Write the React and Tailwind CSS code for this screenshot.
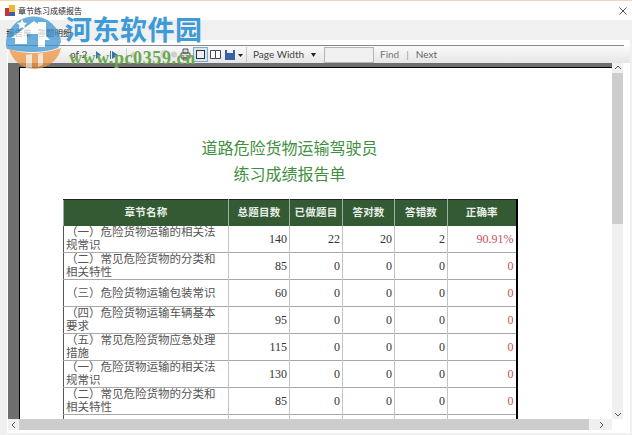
import React from "react";

const rows = [
  ["（一）危险货物运输的相关法规常识", 140, 22, 20, 2, "90.91%"],
  ["（二）常见危险货物的分类和相关特性", 85, 0, 0, 0, "0"],
  ["（三）危险货物运输包装常识", 60, 0, 0, 0, "0"],
  ["（四）危险货物运输车辆基本要求", 95, 0, 0, 0, "0"],
  ["（五）常见危险货物应急处理措施", 115, 0, 0, 0, "0"],
  ["（一）危险货物运输的相关法规常识", 130, 0, 0, 0, "0"],
  ["（二）常见危险货物的分类和相关特性", 85, 0, 0, 0, "0"],
  ["", "", "", "", "", ""],
];

const heads = ["章节名称", "总题目数", "已做题目", "答对数", "答错数", "正确率"];

function ScrollArrow({ d }) {
  return (
    <svg width="8" height="8" viewBox="0 0 8 8" fill="none" stroke="#555" strokeWidth="1">
      <path d={d} />
    </svg>
  );
}

function Toolbar() {
  return (
    <div className="flex h-[17px] items-center whitespace-nowrap bg-gradient-to-b from-[#fafafa] to-[#e6e6e6] text-[10px] text-[#444] font-['Lato',sans-serif]">
      <span className="ml-[62px] w-[18px] text-[10px]">of 2</span>
      <svg className="ml-[7px]" width="26" height="12" viewBox="0 0 26 12">
        <path d="M1 2l5 4-5 4z" fill="#3a6fb5" />
        <path d="M15 2h1v8h-1zM17 2l6 4-6 4z" fill="#3a6fb5" />
      </svg>
      <svg className="ml-[1px]" width="122" height="15" viewBox="0 0 122 15">
        <path d="M4.500 1v13" stroke="#d0d0d0" />
        <path d="M12 4l-4 3.500 4 3.500z" fill="#d4d4d4" />
        <circle cx="43" cy="7.500" r="4" fill="none" stroke="#d4d4d4" strokeWidth="1.500" />
        <circle cx="52" cy="7.500" r="3" fill="#cfcfcf" />
        <path d="M59 6h9v5h-9zM61 2h5v4h-5zM61 11h5v2h-5z" fill="#ddd" stroke="#555" />
        <rect x="71.500" y="0.500" width="14" height="14" fill="#d5e6f5" stroke="#7fa9d0" />
        <rect x="74.500" y="3.500" width="8" height="8" fill="#eee" stroke="#333" />
        <path d="M88.500 3.500h5v8h-5zM93.500 3.500h5v8h-5z" fill="#fff" stroke="#446" />
        <rect x="103" y="3" width="10" height="10" fill="#3a5fa5" />
        <rect x="105" y="3" width="6" height="3" fill="#eee" />
        <path d="M116 7h5l-2.500 3z" fill="#222" />
      </svg>
      <div className="ml-[2px] h-[15px] w-px bg-[#c8c8c8]" />
      <span className="ml-[6px] w-[50px] text-[#444]">Page Width</span>
      <svg width="5" height="4" viewBox="0 0 5 4" className="ml-[8px]">
        <path d="M0 0h5L2.500 4z" fill="#222" />
      </svg>
      <div className="ml-[8px] h-[16px] w-[50px] border border-[#b4b4b4] bg-[#f0f0f0]" />
      <span className="ml-[6px] text-[#777]">Find</span>
      <span className="mx-[7px] text-[#999]">|</span>
      <span className="text-[#666]">Next</span>
    </div>
  );
}

function ReportTable() {
  return (
    <table className="ml-[43px] mt-[11px] w-[453px] table-fixed border-collapse border-l border-r-2 border-l-[#555] border-r-black text-[12px] text-[#333] font-['Liberation_Serif','Noto_Sans_CJK_SC',serif]">
      <colgroup>
        <col className="w-[165px]" />
        <col className="w-[61px]" />
        <col className="w-[53px]" />
        <col className="w-[52px]" />
        <col className="w-[53px]" />
        <col className="w-[69px]" />
      </colgroup>
      <thead>
        <tr className="h-[26px] bg-[#345a34] text-[#e8efe8]">
          {heads.map((h) => (
            <th key={h} className="border-x border-t border-[#9db09d] border-t-[#222] text-[10.500px] font-bold tracking-[0.2px]">
              {h}
            </th>
          ))}
        </tr>
      </thead>
      <tbody>
        {rows.map((r, i) => (
          <tr key={i} className="h-[27px] border-b border-[#a8a8a8]">
            <td className="border-r border-[#c4c4c4] pl-[2px] pr-[12px] align-middle text-[11.500px] leading-[13px] text-[#555] [word-break:break-all]">
              {r[0]}
            </td>
            {r.slice(1, 5).map((v, j) => (
              <td key={j} className="border-r border-[#c4c4c4] pr-[2px] text-right text-[12px]">
                {v}
              </td>
            ))}
            <td className="pr-[2px] text-right text-[12px] text-[#c8505a]">{r[5]}</td>
          </tr>
        ))}
      </tbody>
    </table>
  );
}

function Watermark() {
  return (
    <div className="pointer-events-none absolute left-[4px] top-[14px] flex">
      <svg width="60" height="62" viewBox="0 0 60 62" className="opacity-75">
        <path d="M2 32A27 27 0 0 1 57 28L54 34C40 39 20 39 3 35z" fill="#3d95d2" />
        <path d="M18 5l1.500 3.500 3.500.5-2.500 2.500.5 3.500-3-1.800-3 1.800.5-3.500-2.500-2.500 3.500-.5z" fill="#fff" />
        <path d="M7 24L30 7l4 3V8h8v14l4 4h-5v7h-7V20H23v10H11v-6z" fill="#fff" />
        <path d="M5 35C20 41 40 40 57 34 55 46 43 55 30 55 18 55 8 46 5 35z" fill="#ef9440" />
        <path d="M22 41l6-1v14h-6zM34 40l5-1v12l-5 2z" fill="#f7e6d4" />
      </svg>
      <div className="ml-[1px] flex flex-col">
        <span className="text-[27px] font-bold leading-[30px] tracking-[0.5px] text-[#3f9bd8] font-['Noto_Sans_CJK_SC',sans-serif]">
          河东软件园
        </span>
        <span className="ml-[4px] mt-[4px] text-[18px] font-bold leading-[20px] tracking-[0.6px] text-[#6aa84f] font-['Liberation_Serif',serif]">
          www.pc0359.cn
        </span>
      </div>
    </div>
  );
}

export default function App() {
  return (
    <div className="relative flex h-[435px] w-[632px] flex-col overflow-hidden bg-[#f0f0f0] font-['Noto_Sans_CJK_SC',sans-serif]">
      <div className="h-px bg-[#f2d6b8]" />
      <div className="flex h-[19px] items-center bg-white text-[8px] text-[#222]">
        <svg className="ml-[5px]" width="10" height="11" viewBox="0 0 10 11">
          <rect x="0" y="3" width="5" height="8" fill="#c33" />
          <rect x="4" y="0" width="6" height="7" fill="#f2b632" />
          <rect x="4" y="7" width="6" height="4" fill="#3a62b0" />
        </svg>
        <span className="ml-[3px]">章节练习成绩报告</span>
        <svg className="ml-auto mr-[5px]" width="8" height="8" viewBox="0 0 8 8" stroke="#555" fill="none">
          <path d="M0.500 0.500l7 7M7.500 0.500l-7 7" />
        </svg>
      </div>
      <div className="flex h-[20px] items-end gap-[6px] pb-[1px] pl-[6px] text-[8.500px] leading-[14px] text-[#222]">
        <span>报告单</span>
        <span>答题明细</span>
      </div>
      <div className="ml-[7px] mr-[2px] flex h-[393px] flex-col bg-white pl-px pt-[5px]">
        <div className="mr-[6px] border-t border-[#888]" />
        <Toolbar />
        <div className="flex h-[356px]">
          <div className="flex w-[604px] min-w-0 flex-col bg-[#6e6e6e] pl-[11px] pt-[4px]">
            <div className="min-h-0 flex-1 overflow-hidden border-l border-t border-black bg-white">
              <div className="w-[539px] pt-[64px] text-center text-[16px] leading-[30px] text-[#3f8f3f]">
                <div>道路危险货物运输驾驶员</div>
                <div className="mt-[-4px]">练习成绩报告单</div>
              </div>
              <ReportTable />
            </div>
          </div>
          <div className="flex w-[11px] flex-col items-center bg-[#f0f0f0]">
            <div className="flex h-[10px] items-center">
              <ScrollArrow d="M1 5l3-3 3 3" />
            </div>
            <div className="h-[151px] w-full bg-[#cdcdcd]" />
            <div className="flex-1" />
            <div className="flex h-[10px] items-center">
              <ScrollArrow d="M1 3l3 3 3-3" />
            </div>
          </div>
        </div>
        <div className="flex h-[11px] w-[604px] items-center bg-[#f0f0f0]">
          <div className="flex w-[11px] justify-center">
            <ScrollArrow d="M5 1L2 4l3 3" />
          </div>
          <div className="h-full w-[570px] bg-[#cdcdcd]" />
          <div className="flex flex-1 justify-center">
            <ScrollArrow d="M3 1l3 3-3 3" />
          </div>
        </div>
      </div>
      <Watermark />
    </div>
  );
}
